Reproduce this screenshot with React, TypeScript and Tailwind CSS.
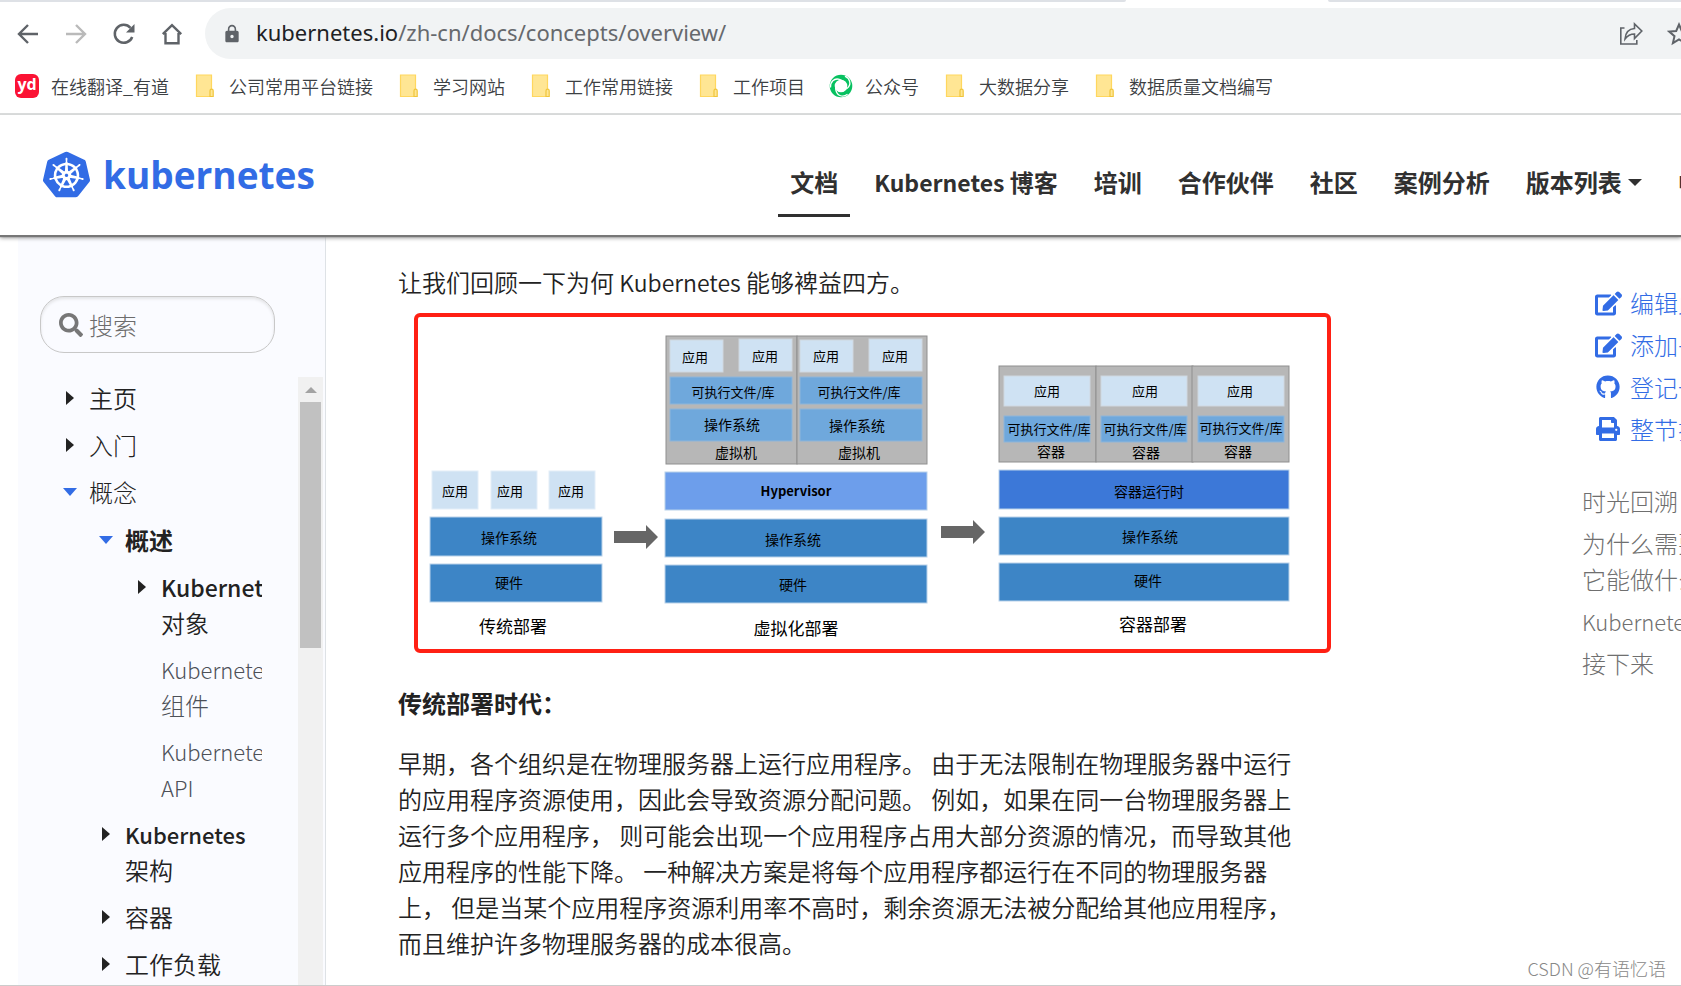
import type { ReactNode } from "react";
import { FaEdit, FaGithub, FaPrint, FaSearch } from "react-icons/fa";
import { MdLock } from "react-icons/md";
import { SiKubernetes } from "react-icons/si";

const bookmarks = [
  { label: "在线翻译_有道", icon: "youdao" },
  { label: "公司常用平台链接", icon: "folder" },
  { label: "学习网站", icon: "folder" },
  { label: "工作常用链接", icon: "folder" },
  { label: "工作项目", icon: "folder" },
  { label: "公众号", icon: "wechat" },
  { label: "大数据分享", icon: "folder" },
  { label: "数据质量文档编写", icon: "folder" }
];

const navItems: { key: string; label: ReactNode; active?: boolean }[] = [
  { key: "docs", label: "文档", active: true },
  { key: "blog", label: <><span className="text-[23px]">Kubernetes</span> 博客</> },
  { key: "training", label: "培训" },
  { key: "partners", label: "合作伙伴" },
  { key: "community", label: "社区" },
  { key: "cases", label: "案例分析" }
];

const pageActions = [
  { label: "编辑此页", icon: <FaEdit size={27} /> },
  { label: "添加子页面", icon: <FaEdit size={27} /> },
  { label: "登记一个问题", icon: <FaGithub size={24} /> },
  { label: "整节打印", icon: <FaPrint size={24} /> }
];

function BookmarkIcon({ name }: { name: string }) {
  if (name === "youdao") {
    return (
      <span className="flex size-6 items-center justify-center rounded-md bg-[#fb1334] pb-1 font-['Open_Sans',sans-serif] text-base leading-4 font-bold text-white">
        yd
      </span>
    );
  }
  if (name === "wechat") {
    return (
      <svg viewBox="0 0 24 24" className="size-6" fill="none">
        <circle cx="12" cy="12" r="8.800" stroke="#07c160" strokeWidth="5" />
        {[0, 120, 240].map((angle) => (
          <path
            key={angle}
            d="M5.500 12.500C5 7 9 2.500 15 4.500c3 1 5 3 6 5.500"
            transform={`rotate(${angle} 12 12) translate(-4 1)`}
            stroke="#fff"
            strokeWidth="1.300"
          />
        ))}
      </svg>
    );
  }
  return (
    <svg viewBox="0 0 24 24" className="size-6">
      <path d="M3.500 1h15v21.500h-15z" fill="#ffe694" stroke="#ffd75e" strokeWidth="1.200" />
      <path d="M17 22.500v-5.700a1.600 1.600 0 0 1 3.200 0v5.700z" fill="#ffe694" stroke="#f0c63c" strokeWidth="1.200" />
    </svg>
  );
}

function BrowserBar() {
  return (
    <div className="border-b-2 border-[#dadcdc] bg-white">
      <div className="flex h-0.5">
        <div className="w-[67%] rounded-br bg-[#dee1e6]" />
        <div className="w-[12%]" />
        <div className="flex-1 rounded-bl bg-[#dee1e6]" />
      </div>
      <div className="flex items-center pt-1.5 pl-4">
        <div className="flex shrink-0 gap-6 pr-[21px] text-[#5f6368]">
          <button aria-label="后退">
            <svg viewBox="0 0 24 24" className="size-6" fill="none" stroke="currentColor" strokeWidth="2.400">
              <path d="M22 12H3.500M12 3 3 12l9 9" />
            </svg>
          </button>
          <button aria-label="前进" className="text-[#bababa]">
            <svg viewBox="0 0 24 24" className="size-6" fill="none" stroke="currentColor" strokeWidth="2.400">
              <path d="M2 12h18.500M12 3l9 9-9 9" />
            </svg>
          </button>
          <button aria-label="重新加载">
            <svg viewBox="0 0 24 24" className="size-6" fill="none" stroke="currentColor" strokeWidth="2.500">
              <path d="M20.200 15A9 9 0 1 1 18.500 5.800" />
              <path d="M22.500 2v8.500H14z" fill="currentColor" stroke="none" />
            </svg>
          </button>
          <button aria-label="主页">
            <svg viewBox="0 0 24 24" className="size-6" fill="none" stroke="currentColor" strokeWidth="2.400">
              <path d="M2.800 12.200 12 3.200l9.200 9M5.500 11v10.300h13V11" />
            </svg>
          </button>
        </div>
        <div className="-mr-8 flex h-[51px] min-w-0 flex-1 items-center rounded-full bg-[#f1f3f4] pl-[17px]">
          <MdLock size={20} className="shrink-0 text-[#5f6368]" />
          <div className="ml-3.5 min-w-0 flex-1 pb-[3px] font-['Noto_Sans',sans-serif] text-[22px] leading-8 whitespace-nowrap text-[#202124]">
            kubernetes.io<span className="text-[#66696d]">/zh-cn/docs/concepts/overview/</span>
          </div>
          <div className="flex shrink-0 items-center gap-6 pr-[22px] text-[#5f6368]">
            <button aria-label="分享">
              <svg viewBox="0 0 24 24" className="size-6" fill="none" stroke="currentColor" strokeWidth="1.600">
                <path d="M5.500 6H1.800v16h16v-4" />
                <path d="M15.500 2v4.500c-6 .4-9 4-9.500 10.500 2.500-3.500 5-5 9.500-5v4.500L22.800 9z" />
              </svg>
            </button>
            <button aria-label="收藏">
              <svg viewBox="0 0 24 24" className="size-6" fill="none" stroke="currentColor" strokeWidth="2">
                <path d="m12 2.500 2.800 6.500 7 .6-5.300 4.600 1.600 6.900-6.100-3.700-6.100 3.700 1.600-6.900-5.300-4.600 7-.6z" />
              </svg>
            </button>
          </div>
        </div>
      </div>
      <div className="flex h-[54px] items-center gap-6 overflow-hidden pl-[15px]">
        {bookmarks.map((item) => (
          <a key={item.label} href="#" className="flex shrink-0 items-center gap-3 text-lg leading-6 font-[350] text-[#3c4043]">
            <BookmarkIcon name={item.icon} />
            {item.label}
          </a>
        ))}
      </div>
    </div>
  );
}

function SiteHeader() {
  return (
    <header className="relative flex h-[120px] gap-[5px] overflow-x-clip bg-white shadow-[0_2px_1px_#777,0_3px_4px_#999]">
      <div className="w-[46%] shrink-0 pt-9 pl-[43px]">
        <a href="#" className="flex w-fit items-center gap-[13px] text-[#326ce5]">
          <SiKubernetes size={47} />
          <span className="font-['Open_Sans',sans-serif] text-[37px] leading-[44px] font-bold">kubernetes</span>
        </a>
      </div>
      <nav className="flex items-start gap-3 pt-[45px] text-2xl font-bold whitespace-nowrap text-[#303030]">
        {navItems.map((item) => (
          <a
            key={item.key}
            href="#"
            className={item.active ? "border-b-[3px] border-[#303030] px-3 pt-1 pb-3.5 leading-9" : "px-3 pt-1 leading-9"}
          >
            {item.label}
          </a>
        ))}
        <button className="flex items-center gap-1.5 px-3 pt-1 leading-9">
          版本列表
          <svg viewBox="0 0 14 7" className="h-[7px] w-3.5" fill="currentColor">
            <path d="M0 0h14L7 7z" />
          </svg>
        </button>
        <button className="px-3 pt-1 leading-9">中文 (Chinese)</button>
      </nav>
    </header>
  );
}

function TreeItem({ label, open, leaf, children }: { label: ReactNode; open?: boolean; leaf?: boolean; children?: ReactNode }) {
  return (
    <li>
      <div className="flex gap-[7px]">
        <span className="flex h-9 w-6 shrink-0 items-center justify-center">
          {leaf ? null : open ? (
            <svg viewBox="0 0 14 8" className="h-2 w-3.5" fill="#326ce5">
              <path d="M0 0h14L7 8z" />
            </svg>
          ) : (
            <svg viewBox="0 0 8 14" className="h-3.5 w-2" fill="#222">
              <path d="M0 0v14l8-7z" />
            </svg>
          )}
        </span>
        <a href="#" className={leaf ? "min-w-0 font-light text-[#4c5058]" : "min-w-0"}>
          {label}
        </a>
      </div>
      {children}
    </li>
  );
}

function Sidebar() {
  return (
    <aside className="ml-[18px] flex w-[308px] shrink-0 flex-col border-r border-[#dee2e6] bg-[#fafbff] pt-[59px] pl-[22px]">
      <label className="flex h-[57px] w-[235px] shrink-0 items-center gap-1.5 rounded-[24px] border border-[#c8c8c8] pl-[18px] shadow-[inset_0_2px_3px_#e4e5e8]">
        <FaSearch size={24} className="shrink-0 text-[#777]" />
        <input
          type="search"
          aria-label="搜索"
          placeholder="搜索"
          className="w-full min-w-0 bg-transparent text-2xl leading-9 font-light outline-none placeholder:text-[#6c6c6c]"
        />
      </label>
      <div className="mt-6 flex min-h-0 flex-1 justify-between pr-0.5">
        <nav className="w-[222px] overflow-hidden pt-[3px] pl-[18px] text-2xl leading-9 font-[350] text-[#222]">
          <ul className="flex flex-col gap-[11px]">
            <TreeItem label="主页" />
            <TreeItem label={<span className="font-light">入门</span>} />
            <TreeItem label={<span className="font-light">概念</span>} open>
              <ul className="mt-3 flex flex-col gap-[11px] pl-9">
                <TreeItem label={<span className="font-bold">概述</span>} open>
                  <ul className="mt-[11px] flex flex-col gap-2.5 pl-9">
                    <TreeItem label={<><span className="text-[23px] font-medium">Kubernetes</span> 对象</>} />
                    <TreeItem label={<><span className="text-[22px]">Kubernetes</span> 组件</>} leaf />
                    <TreeItem label={<span className="text-[22px]">Kubernetes API</span>} leaf />
                  </ul>
                </TreeItem>
                <TreeItem label={<><span className="text-[22px] font-medium">Kubernetes</span> 架构</>} />
                <TreeItem label="容器" />
                <TreeItem label="工作负载" />
              </ul>
            </TreeItem>
          </ul>
        </nav>
        <div className="w-[25px] bg-[#f1f1f1] px-0.5">
          <div className="flex h-[25px] items-center justify-center">
            <svg viewBox="0 0 12 6" className="h-1.5 w-3" fill="#a3a3a3">
              <path d="M6 0 0 6h12z" />
            </svg>
          </div>
          <div className="h-[246px] bg-[#c1c1c1]" />
        </div>
      </div>
    </aside>
  );
}

type BoxProps = { x: number; y: number; w: number; h: number; fill: string; stroke?: string };

function Box({ x, y, w, h, fill, stroke }: BoxProps) {
  return <rect x={x} y={y} width={w} height={h} fill={fill} stroke={stroke ?? "#b9d2ea"} strokeWidth="1" />;
}

// text is placed by its centre
function Label({ x, y, size = 14, weight = 400, children }: { x: number; y: number; size?: number; weight?: number; children: string }) {
  return (
    <text x={x} y={y - 1} fontSize={size} fontWeight={weight} textAnchor="middle" dominantBaseline="central" fill="#000">
      {children}
    </text>
  );
}

const APP = "#cfe2f3";
const LIB = "#6fa8dc";
const BASE = "#3d85c6";
const GREY = "#b7b7b7";

function DeploymentDiagram() {
  return (
    <svg viewBox="418 316 909 332" className="block w-full" role="img" aria-label="部署演进">
      {[432, 491, 549].map((x) => (
        <Box key={x} x={x} y={470} w={46} h={38} fill={APP} stroke="#e3eef8" />
      ))}
      <Label x={455} y={490} size={13}>应用</Label>
      <Label x={510} y={490} size={13}>应用</Label>
      <Label x={571} y={490} size={13}>应用</Label>
      <Box x={430} y={516} w={172} h={39} fill={BASE} />
      <Box x={430} y={563} w={172} h={38} fill={BASE} />
      <Label x={509} y={537}>操作系统</Label>
      <Label x={509} y={582}>硬件</Label>
      <Label x={513} y={625} size={17}>传统部署</Label>

      <path d="M614 530h32v-6l12 12-12 12v-6h-32z" fill="#666" />

      <Box x={666} y={335} w={131} h={128} fill={GREY} stroke="#8f8f8f" />
      <Box x={797} y={335} w={130} h={128} fill={GREY} stroke="#8f8f8f" />
      {[670, 800].map((x) => (
        <g key={x}>
          <Box x={x} y={339} w={53} h={32} fill={APP} stroke="#d0d8e0" />
          <Box x={x + 69} y={338} w={53} h={32} fill={APP} stroke="#d0d8e0" />
          <Box x={x} y={376} w={122} h={27} fill={LIB} stroke="#8fb6da" />
          <Box x={x} y={408} w={122} h={32} fill={LIB} stroke="#8fb6da" />
        </g>
      ))}
      <Label x={695} y={356} size={13}>应用</Label>
      <Label x={765} y={355} size={13}>应用</Label>
      <Label x={826} y={355} size={13}>应用</Label>
      <Label x={895} y={355} size={13}>应用</Label>
      <Label x={733} y={391} size={13}>可执行文件/库</Label>
      <Label x={859} y={391} size={13}>可执行文件/库</Label>
      <Label x={732} y={424}>操作系统</Label>
      <Label x={857} y={425}>操作系统</Label>
      <Label x={736} y={452}>虚拟机</Label>
      <Label x={859} y={452}>虚拟机</Label>
      <Box x={665} y={471} w={262} h={38} fill="#6d9eeb" />
      <Box x={665} y={518} w={262} h={38} fill={BASE} />
      <Box x={665} y={564} w={262} h={38} fill={BASE} />
      <Label x={796} y={490} size={13} weight={700}>Hypervisor</Label>
      <Label x={793} y={539}>操作系统</Label>
      <Label x={793} y={584}>硬件</Label>
      <Label x={796} y={627} size={17}>虚拟化部署</Label>

      <path d="M941 525h32v-6l12 12-12 12v-6h-32z" fill="#666" />

      {[999, 1096, 1192].map((x) => (
        <Box key={x} x={x} y={365} w={97} h={96} fill={GREY} stroke="#8f8f8f" />
      ))}
      {[1004, 1101, 1198].map((x) => (
        <g key={x}>
          <Box x={x} y={375} w={86} h={30} fill={APP} stroke="#d0d8e0" />
          <Box x={x} y={415} w={86} h={26} fill={LIB} stroke="#8fb6da" />
        </g>
      ))}
      <Label x={1047} y={390} size={13}>应用</Label>
      <Label x={1145} y={390} size={13}>应用</Label>
      <Label x={1240} y={390} size={13}>应用</Label>
      <Label x={1049} y={428} size={13}>可执行文件/库</Label>
      <Label x={1145} y={428} size={13}>可执行文件/库</Label>
      <Label x={1241} y={427} size={13}>可执行文件/库</Label>
      <Label x={1051} y={451}>容器</Label>
      <Label x={1146} y={452}>容器</Label>
      <Label x={1238} y={451}>容器</Label>
      <Box x={999} y={469} w={290} h={39} fill="#3c78d8" />
      <Box x={999} y={516} w={290} h={38} fill={BASE} />
      <Box x={999} y={562} w={290} h={38} fill={BASE} />
      <Label x={1149} y={491}>容器运行时</Label>
      <Label x={1150} y={536}>操作系统</Label>
      <Label x={1148} y={580}>硬件</Label>
      <Label x={1153} y={623} size={17}>容器部署</Label>
    </svg>
  );
}

function Article() {
  return (
    <main className="min-w-0 flex-1 pt-[27px] pl-[72px] text-2xl leading-9 font-[350] text-[#222]">
      <p>让我们回顾一下为何 <span className="text-[23px]">Kubernetes</span> 能够裨益四方。</p>
      <figure className="mt-[13px] ml-4 max-w-[917px] rounded-md border-4 border-[#ff2014]">
        <DeploymentDiagram />
      </figure>
      <h3 className="mt-8 font-bold">传统部署时代：</h3>
      <p className="mt-6 max-w-[900px]">
        早期，各个组织是在物理服务器上运行应用程序。 由于无法限制在物理服务器中运行的应用程序资源使用，因此会导致资源分配问题。
        例如，如果在同一台物理服务器上运行多个应用程序， 则可能会出现一个应用程序占用大部分资源的情况，而导致其他应用程序的性能下降。
        一种解决方案是将每个应用程序都运行在不同的物理服务器上， 但是当某个应用程序资源利用率不高时，剩余资源无法被分配给其他应用程序，
        而且维护许多物理服务器的成本很高。
      </p>
    </main>
  );
}

function PageAside() {
  return (
    <aside className="w-[99px] shrink-0 overflow-hidden pt-12 text-2xl leading-9 font-light whitespace-nowrap">
      <ul className="flex flex-col gap-1.5 pl-3 text-[#326ce5]">
        {pageActions.map((action) => (
          <li key={action.label}>
            <a href="#" className="flex items-center gap-2">
              <span className="flex w-7 shrink-0 justify-center">{action.icon}</span>
              {action.label}
            </a>
          </li>
        ))}
      </ul>
      <ul className="mt-9 flex flex-col gap-1.5 text-[#6f6f6f]">
        <li><a href="#">时光回溯</a></li>
        <li><a href="#">为什么需要 Kubernetes，<br />它能做什么</a></li>
        <li><a href="#"><span className="text-[22px]">Kubernetes</span> 不是什么</a></li>
        <li><a href="#">接下来</a></li>
      </ul>
    </aside>
  );
}

export default function App() {
  return (
    <div className="relative flex h-screen flex-col overflow-hidden bg-white font-['Noto_Sans_CJK_SC',sans-serif]">
      <BrowserBar />
      <SiteHeader />
      <div className="flex min-h-0 flex-1 border-b border-[#ccc] pt-0.5">
        <Sidebar />
        <Article />
        <PageAside />
      </div>
      <div className="absolute right-[15px] bottom-1.5 text-lg leading-6 font-light text-[#888]">CSDN @有语忆语</div>
    </div>
  );
}
